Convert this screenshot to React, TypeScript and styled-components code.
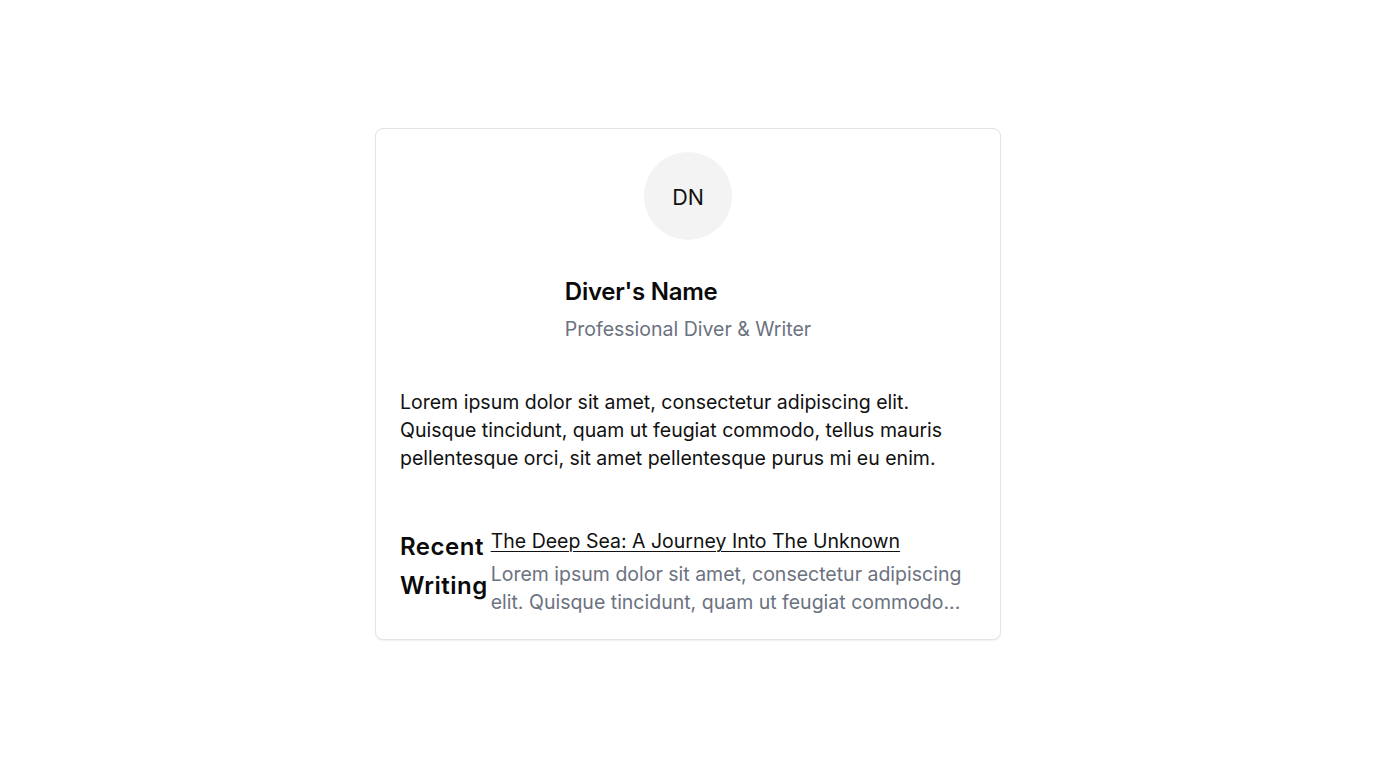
import React from "react";
import styled, { createGlobalStyle } from "styled-components";

const GlobalStyle = createGlobalStyle`
  * { box-sizing: border-box; }
  html, body { margin: 0; padding: 0; background: #ffffff; }
  body {
    font-family: Inter, "Noto Sans", "Liberation Sans", sans-serif;
    color: #111111;
    -webkit-font-smoothing: antialiased;
  }
`;

const Page = styled.main`
  min-height: 100vh;
  display: flex;
  align-items: center;
  justify-content: center;
`;

const Card = styled.article`
  width: 626px;
  border: 1px solid #e4e4e7;
  border-radius: 8px;
  background: #ffffff;
  box-shadow: 0 1px 2px rgba(0, 0, 0, 0.06);
  padding: 23px 24px 23px;
  display: flex;
  flex-direction: column;
`;

const Header = styled.header`
  display: flex;
  flex-direction: column;
  align-items: center;
`;

const Avatar = styled.div`
  width: 88px;
  height: 88px;
  padding-top: 2px;
  border-radius: 50%;
  background: #f3f3f3;
  display: flex;
  align-items: center;
  justify-content: center;
  font-size: 21.5px;
  color: #111111;
`;

const Identity = styled.div`
  margin-top: 36px;
  display: flex;
  flex-direction: column;
  align-items: flex-start;
`;

const Name = styled.h1`
  margin: 0 0 7px;
  font-size: 24px;
  line-height: 32px;
  font-weight: 600;
  letter-spacing: -0.25px;
  color: #0a0a0a;
`;

const Role = styled.p`
  margin: 0;
  font-size: 19.5px;
  line-height: 28px;
  color: #6b7280;
`;

const Bio = styled.p`
  margin: 45px 0 0;
  font-size: 19.5px;
  line-height: 28px;
  color: #111111;
`;

const Recent = styled.section`
  margin-top: 55px;
  display: flex;
  align-items: flex-start;
  gap: 3px;
`;

const RecentHeading = styled.h2`
  margin: 0;
  flex: 0 0 auto;
  width: min-content;
  font-size: 24px;
  line-height: 39px;
  font-weight: 600;
  letter-spacing: 0.5px;
  color: #0a0a0a;
`;

const Post = styled.div`
  flex: 1 1 auto;
  min-width: 0;
  display: flex;
  flex-direction: column;
`;

const PostTitle = styled.a`
  font-size: 19.5px;
  line-height: 28px;
  color: #111111;
  text-decoration: underline;
  text-underline-offset: 3px;
  text-decoration-thickness: 1px;
  margin-bottom: 5px;
`;

const Excerpt = styled.p`
  margin: 0;
  font-size: 19.5px;
  line-height: 28px;
  color: #6b7280;
`;

export default function App() {
  return (
    <>
      <GlobalStyle />
      <Page>
        <Card>
          <Header>
            <Avatar>DN</Avatar>
            <Identity>
              <Name>Diver's Name</Name>
              <Role>Professional Diver &amp; Writer</Role>
            </Identity>
          </Header>
          <Bio>
            Lorem ipsum dolor sit amet, consectetur adipiscing elit. Quisque
            tincidunt, quam ut feugiat commodo, tellus mauris pellentesque orci,
            sit amet pellentesque purus mi eu enim.
          </Bio>
          <Recent>
            <RecentHeading>Recent Writing</RecentHeading>
            <Post>
              <PostTitle href="#">The Deep Sea: A Journey Into The Unknown</PostTitle>
              <Excerpt>
                Lorem ipsum dolor sit amet, consectetur adipiscing elit. Quisque
                tincidunt, quam ut feugiat commodo...
              </Excerpt>
            </Post>
          </Recent>
        </Card>
      </Page>
    </>
  );
}
